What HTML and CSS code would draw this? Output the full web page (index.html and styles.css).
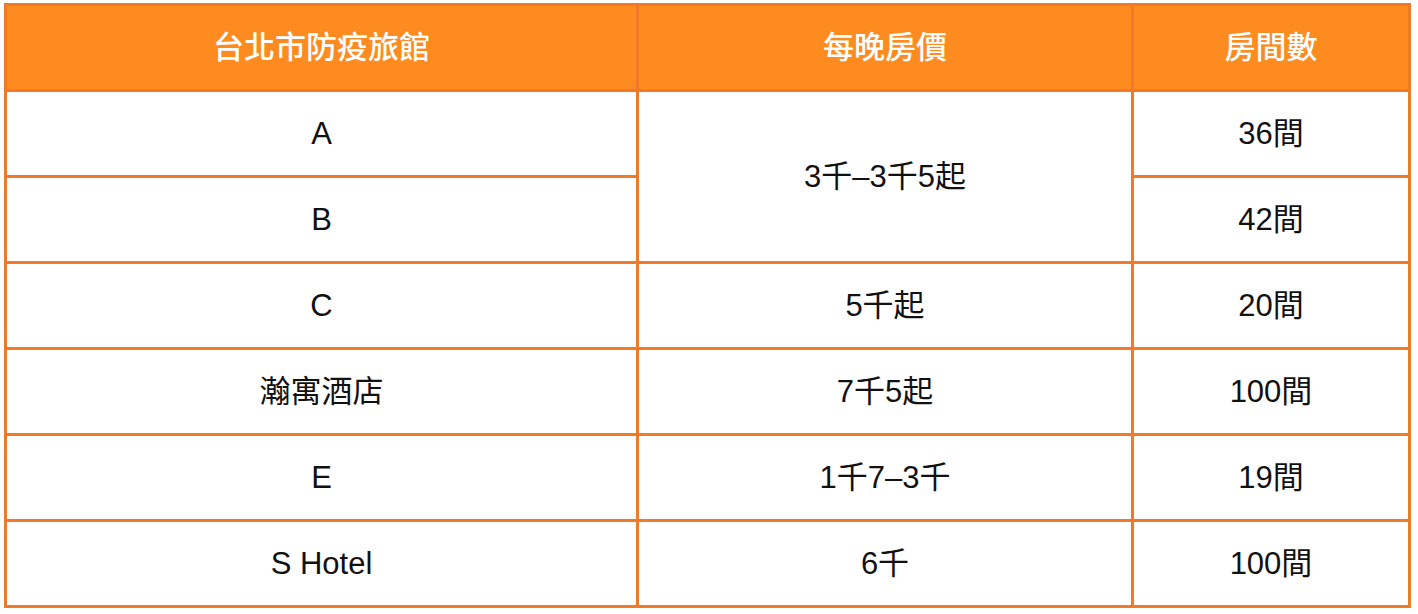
FILE: index.html
```html
<!DOCTYPE html>
<html lang="zh-Hant">
<head>
<meta charset="utf-8">
<title>台北市防疫旅館</title>
<link rel="stylesheet" href="styles.css">
</head>
<body>
<table class="hotels">
  <colgroup>
    <col class="c1">
    <col class="c2">
    <col class="c3">
  </colgroup>
  <thead>
    <tr>
      <th>台北市防疫旅館</th>
      <th>每晚房價</th>
      <th>房間數</th>
    </tr>
  </thead>
  <tbody>
    <tr><td>A</td><td rowspan="2">3千–3千5起</td><td>36間</td></tr>
    <tr><td>B</td><td>42間</td></tr>
    <tr><td>C</td><td>5千起</td><td>20間</td></tr>
    <tr><td>瀚寓酒店</td><td>7千5起</td><td>100間</td></tr>
    <tr><td>E</td><td>1千7–3千</td><td>19間</td></tr>
    <tr><td>S Hotel</td><td>6千</td><td>100間</td></tr>
  </tbody>
</table>
</body>
</html>
```
FILE: styles.css
```css
html, body {
  margin: 0;
  padding: 0;
  background: #ffffff;
}
body {
  padding: 3px 0 0 4px;
  font-family: "Liberation Sans", "Noto Sans CJK TC", sans-serif;
  color: #111111;
}
.hotels {
  border-collapse: separate;
  border-spacing: 0;
  table-layout: fixed;
  width: 1407px;
  border-left: 3px solid #f07a27;
  border-top: 3px solid #f07a27;
}
.c1 { width: 632px; }
.c2 { width: 495px; }
.c3 { width: 277px; }
.hotels th,
.hotels td {
  box-sizing: border-box;
  height: 86px;
  padding: 0;
  border-right: 3px solid #f07a27;
  border-bottom: 3px solid #f07a27;
  text-align: center;
  vertical-align: middle;
  font-size: 31px;
  font-weight: normal;
  line-height: 1;
}
.hotels th {
  background: #fd8b1f;
  color: #ffffff;
  font-weight: 500;
}
```
